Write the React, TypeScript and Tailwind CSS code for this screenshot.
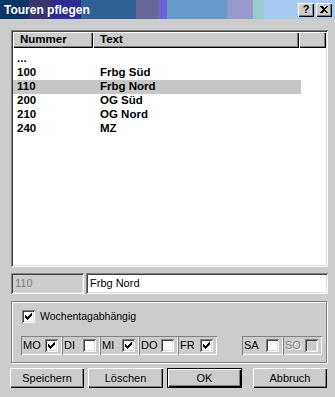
import React from "react";

const raised =
  "shadow-[inset_1px_1px_0_#ffffff,inset_-1px_-1px_0_#000000,inset_-2px_-2px_0_#808080]";
const sunken =
  "shadow-[inset_1px_1px_0_#808080,inset_-1px_-1px_0_#ffffff,inset_2px_2px_0_#404040,inset_-2px_-2px_0_#dcdcdc]";

const rows = [
  { num: "...", text: "" },
  { num: "100", text: "Frbg Süd" },
  { num: "110", text: "Frbg Nord", selected: true },
  { num: "200", text: "OG Süd" },
  { num: "210", text: "OG Nord" },
  { num: "240", text: "MZ" },
];

const days = [
  { label: "MO", checked: true, w: "w-[41px]" },
  { label: "DI", checked: false, w: "w-[38px]" },
  { label: "MI", checked: true, w: "w-[39px]" },
  { label: "DO", checked: false, w: "w-[39px]" },
  { label: "FR", checked: true, w: "w-[39px]" },
];

function Check() {
  return (
    <svg width="7" height="7" viewBox="0 0 7 7" shapeRendering="crispEdges">
      <path
        d="M0 2H1V3H2V4H3V3H4V2H5V1H6V0H7V3H6V4H5V5H4V6H3V7H2V6H1V5H0Z"
        fill="#000"
      />
    </svg>
  );
}

function CheckBox({ checked, disabled }: { checked?: boolean; disabled?: boolean }) {
  return (
    <div
      className={`w-[13px] h-[13px] flex items-center justify-center shrink-0 ${sunken} ${
        disabled ? "bg-[#cccccc]" : "bg-white"
      }`}
    >
      {checked && <Check />}
    </div>
  );
}

function DayBox({
  label,
  checked,
  w,
  disabled,
}: {
  label: string;
  checked?: boolean;
  w: string;
  disabled?: boolean;
}) {
  return (
    <div
      className={`${w} h-[19px] flex items-center justify-between pl-[2px] pr-[4px] shadow-[inset_1px_1px_0_#808080,inset_-1px_-1px_0_#ffffff]`}
    >
      <span
        className={
          disabled ? "text-[#808080] [text-shadow:1px_1px_0_#ffffff]" : "text-black"
        }
      >
        {label}
      </span>
      <CheckBox checked={checked} disabled={disabled} />
    </div>
  );
}

function Button({ label, w, isDefault }: { label: string; w: string; isDefault?: boolean }) {
  if (isDefault) {
    return (
      <div className={`${w} h-[20px] border border-black flex`}>
        <div className={`flex-1 flex items-center justify-center ${raised}`}>{label}</div>
      </div>
    );
  }
  return (
    <div className={`${w} h-[20px] flex items-center justify-center ${raised}`}>{label}</div>
  );
}

export default function App() {
  return (
    <div className="w-[335px] h-[397px] bg-[#cccccc] flex flex-col overflow-hidden text-[11px] text-black font-['Liberation_Sans',Arial,sans-serif]">
      {/* title bar */}
      <div className="h-[19px] flex items-center justify-between pl-[4px] pr-[3px] bg-[linear-gradient(to_right,#0c3464_0px,#0c3464_29px,#3a3468_29px,#3a3468_51px,#2e2c8e_51px,#2e2c8e_81px,#2f6096_81px,#2f6096_136px,#666699_136px,#666699_158px,#6666cc_158px,#6666cc_167px,#6699cc_167px,#6699cc_227px,#9999cc_227px,#9999cc_253px,#99cccc_253px,#99cccc_264px,#a6caf0_264px)]">
        <span className="text-white font-bold text-[12px]">Touren pflegen</span>
        <div className="flex gap-[2px]">
          <div className={`w-[16px] h-[14px] bg-[#cccccc] flex items-center justify-center font-bold text-[11px] leading-none ${raised}`}>
            ?
          </div>
          <div className={`w-[16px] h-[14px] bg-[#cccccc] flex items-center justify-center ${raised}`}>
            <svg width="8" height="7" viewBox="0 0 8 7" shapeRendering="crispEdges">
              <path d="M0 0H2L4 2L6 0H8L5 3.5L8 7H6L4 5L2 7H0L3 3.5Z" fill="#000" />
            </svg>
          </div>
        </div>
      </div>

      <div className="pl-[11px] pt-[11px] flex flex-col w-[328px]">
        {/* list */}
        <div className={`h-[237px] w-[317px] bg-white p-[2px] ${sunken}`}>
          <div className="flex h-[16px] bg-[#cccccc] font-bold text-[11.5px]">
            <div className={`w-[80px] pl-[7px] flex items-center ${raised}`}>Nummer</div>
            <div className={`w-[206px] pl-[7px] flex items-center ${raised}`}>Text</div>
            <div className={`flex-1 ${raised}`} />
          </div>
          <div className="pt-[4px] font-bold text-[11.5px]">
            {rows.map((r) => (
              <div
                key={r.num}
                className={`flex h-[14px] items-center w-[288px] ${r.selected ? "bg-[#c6c6c6]" : ""}`}
              >
                <div className="w-[80px] pl-[4px]">{r.num}</div>
                <div className="pl-[7px]">{r.text}</div>
              </div>
            ))}
          </div>
        </div>

        {/* fields */}
        <div className="mt-[6px] flex h-[21px] gap-[2px] w-[317px]">
          <div className={`w-[73px] bg-[#cccccc] flex items-center pl-[4px] text-[#808080] ${sunken}`}>
            110
          </div>
          <div className={`flex-1 bg-white flex items-center pl-[4px] ${sunken}`}>Frbg Nord</div>
        </div>

        {/* group */}
        <div className="mt-[7px] h-[62px] w-[316px] border border-[#808080] shadow-[inset_1px_1px_0_#ffffff,1px_1px_0_#ffffff] flex flex-col pl-[9px] pt-[7px]">
          <div className="flex items-center gap-[5px] pl-[1px]">
            <CheckBox checked />
            <span className="text-[10.5px]">Wochentagabhängig</span>
          </div>
          <div className="mt-[11px] flex">
            {days.map((d) => (
              <DayBox key={d.label} label={d.label} checked={d.checked} w={d.w} />
            ))}
            <div className="w-[25px]" />
            <DayBox label="SA" w="w-[41px]" />
            <DayBox label="SO" w="w-[39px]" disabled />
          </div>
        </div>

        {/* buttons */}
        <div className="mt-[5px] flex -ml-[1px]">
          <Button label="Speichern" w="w-[74px]" />
          <div className="w-[4px]" />
          <Button label="Löschen" w="w-[75px]" />
          <div className="w-[4px]" />
          <Button label="OK" w="w-[75px]" isDefault />
          <div className="w-[11px]" />
          <Button label="Abbruch" w="w-[74px]" />
        </div>
      </div>
    </div>
  );
}
